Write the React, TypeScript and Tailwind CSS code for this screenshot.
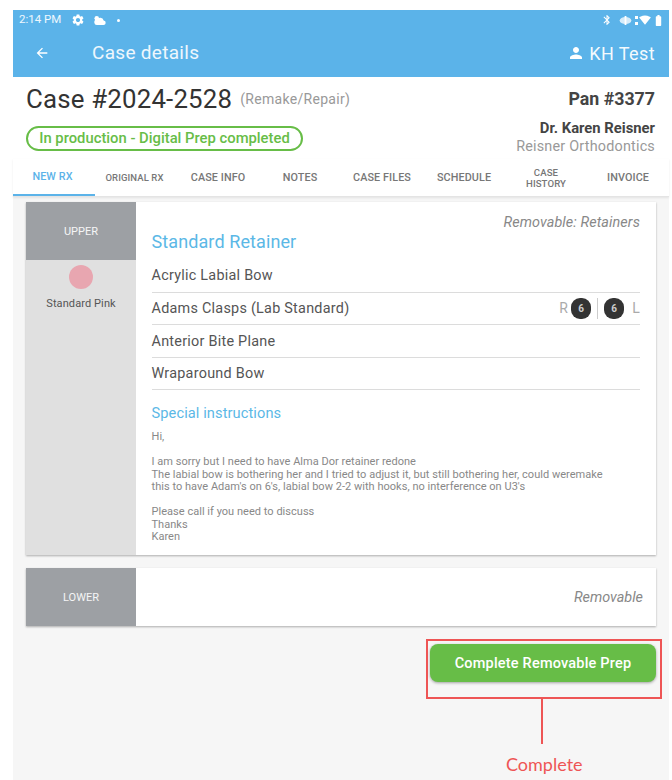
import { MdArrowBack, MdBatteryFull, MdBluetooth, MdPerson, MdSettings, MdSignalWifi4Bar } from 'react-icons/md';

const tabs = ['CASE INFO', 'NOTES', 'CASE FILES', 'SCHEDULE'];

function Option({ label, children }: { label: string; children?: React.ReactNode }) {
  return (
    <div className="flex h-[32.6px] items-center justify-between border-b border-[#dcdcdc] pt-px text-[14.4px] tracking-[0.25px] text-[#555]">
      <span>{label}</span>
      {children}
    </div>
  );
}

function ToothBadge() {
  return (
    <span className="flex h-[21px] w-5 items-center justify-center rounded-[9px] bg-[#333] text-[10px] font-bold text-[#ccc]">
      6
    </span>
  );
}

export default function App() {
  return (
    <div className="h-[780px] w-[672px] overflow-hidden bg-white pt-[10px] pr-[3px] pl-[13px] font-['Roboto',sans-serif]">
      <div className="relative flex h-[770px] flex-col bg-[#f6f6f6]">
        {/* Status bar + app bar */}
        <header className="h-[67px] shrink-0 bg-[#5bb3e9] text-white">
          <div className="flex h-[19px] items-center justify-between pt-px pr-[4px] pl-[6px]">
            <div className="flex items-center">
              <span className="text-[11.5px] leading-none text-white/90">2:14 PM</span>
              <MdSettings className="ml-[10px] size-[14px]" />
              <svg viewBox="0 0 14 12" className="ml-[8px] h-[11px] w-[13px]" fill="white">
                <circle cx="4" cy="3.5" r="2.5" />
                <path d="M4.5 11a3 3 0 0 1-.4-6 4 4 0 0 1 7.4 1A2.5 2.5 0 0 1 11 11z" />
              </svg>
              <span className="ml-[11px] size-[3px] rounded-full bg-white" />
            </div>
            <div className="flex items-center">
              <MdBluetooth className="size-[12px]" />
              <svg viewBox="0 0 14 10" className="ml-[6px] h-[9px] w-[13px]" fill="white">
                <ellipse cx="7" cy="5" rx="6.5" ry="4" opacity="0.75" />
                <rect x="6" y="0" width="2" height="10" />
              </svg>
              <span className="ml-[3px] flex h-[9px] w-[3px] flex-col justify-between">
                <span className="h-[3px] bg-white" />
                <span className="h-[3px] bg-white" />
              </span>
              <MdSignalWifi4Bar className="ml-px size-[12px]" />
              <MdBatteryFull className="ml-px size-[13px]" />
            </div>
          </div>
          <div className="flex h-[48px] items-center pr-[14px] pl-[21px]">
            <MdArrowBack className="size-[16px]" />
            <span className="ml-[42px] text-[19px] tracking-[0.3px] text-white/90">Case details</span>
            <div className="ml-auto flex items-center gap-[4px]">
              <MdPerson className="size-[18px]" />
              <span className="text-[18px] tracking-[0.4px] text-white/95">KH Test</span>
            </div>
          </div>
        </header>

        {/* Case summary */}
        <section className="flex h-[82px] shrink-0 justify-between bg-white pr-[14px] pl-[13px]">
          <div>
            <div className="flex items-center pt-[6px]">
              <span className="text-[25.8px] leading-[32px] tracking-[0.2px] text-[#333]">Case #2024-2528</span>
              <span className="ml-2 text-[14px] tracking-[0.3px] text-[#999]">(Remake/Repair)</span>
            </div>
            <div className="mt-[11px] flex h-[25px] w-[277px] items-center justify-center rounded-full border-2 border-[#67bd47] text-[14.8px] font-medium text-[#67bd47]">
              In production - Digital Prep completed
            </div>
          </div>
          <div className="flex flex-col items-end pt-[11px]">
            <span className="text-[17.8px] leading-[22px] font-bold text-[#444]">Pan #3377</span>
            <span className="mt-[9px] text-[14.8px] leading-[18px] font-bold text-[#444]">Dr. Karen Reisner</span>
            <span className="text-[14.4px] leading-[19px] tracking-[0.2px] text-[#999]">Reisner Orthodontics</span>
          </div>
        </section>

        {/* Tabs */}
        <nav className="flex h-[38px] shrink-0 items-center border-b border-[#e4e4e4] bg-white pt-px text-[10.8px] font-medium tracking-[0.1px] text-[#777] shadow-[0_1px_2px_rgba(0,0,0,0.08)]">
          <div className="flex h-full w-[82px] items-center justify-center border-b-2 border-[#5bb3e9] pr-[3px] text-[#5bb3e9]">NEW RX</div>
          <div className="flex h-full w-[82px] items-center justify-center pr-[3px] text-[9.5px]">ORIGINAL RX</div>
          {tabs.map((tab) => (
            <div key={tab} className="flex h-full w-[82px] items-center justify-center">{tab}</div>
          ))}
          <div className="flex h-full w-[82px] items-center justify-center text-center text-[9.6px] leading-[11px]">CASE<br />HISTORY</div>
          <div className="flex h-full w-[82px] items-center justify-center">INVOICE</div>
        </nav>

        <main className="flex flex-col px-[13px] pt-[5px]">
          {/* Upper */}
          <div className="flex h-[353px] bg-white shadow-[0_1px_2px_rgba(0,0,0,0.3)]">
            <div className="w-[110px] shrink-0 bg-[#e0e0e0]">
              <div className="flex h-[58px] items-center justify-center bg-[#9da0a4] pt-[2px] text-[11px] text-white/90">UPPER</div>
              <div className="mx-auto mt-[5px] size-6 rounded-full bg-[#e8a6b0]" />
              <div className="mt-[7px] text-center text-[11px] tracking-[0.1px] text-[#555]">Standard Pink</div>
            </div>
            <div className="flex-1 pr-4 pl-[15.5px]">
              <div className="pt-[13px] text-right text-[14.4px] leading-[16px] tracking-[0.1px] text-[#888] italic">Removable: Retainers</div>
              <div className="-mt-px text-[18px] leading-[24px] tracking-[0.1px] text-[#5bb8e6]">Standard Retainer</div>
              <div className="mt-[6px]">
                <Option label="Acrylic Labial Bow" />
                <Option label="Adams Clasps (Lab Standard)">
                  <div className="flex items-center text-[14px] text-[#aaa]">
                    <span className="mr-[3px]">R</span>
                    <ToothBadge />
                    <span className="mx-[6px] h-[21px] w-px bg-[#ccc]" />
                    <ToothBadge />
                    <span className="ml-[8px]">L</span>
                  </div>
                </Option>
                <Option label="Anterior Bite Plane" />
                <Option label="Wraparound Bow" />
              </div>
              <div className="mt-[13px] text-[14.6px] leading-[20px] tracking-[0.1px] text-[#5bb8e6]">Special instructions</div>
              <p className="mt-[8px] text-[11px] leading-[12.5px] tracking-[0.03px] whitespace-pre-line text-[#888]">
                {"Hi,\n\nI am sorry but I need to have Alma Dor retainer redone\nThe labial bow is bothering her and I tried to adjust it, but still bothering her, could weremake\nthis to have Adam's on 6's, labial bow 2-2 with hooks, no interference on U3's\n\nPlease call if you need to discuss\nThanks\nKaren"}
              </p>
            </div>
          </div>

          {/* Lower */}
          <div className="mt-[13px] flex h-[58px] bg-white shadow-[0_1px_2px_rgba(0,0,0,0.3)]">
            <div className="flex w-[110px] shrink-0 items-center justify-center bg-[#9da0a4] pt-[2px] text-[11px] text-white/90">LOWER</div>
            <div className="flex-1 pt-[22px] pr-[13px] text-right text-[14.4px] leading-[16px] text-[#888] italic">Removable</div>
          </div>

          <div className="mt-[18px] flex justify-end">
            <button className="h-[38px] w-[226px] rounded-[8px] bg-[#67bd47] pt-px text-[14.5px] font-medium tracking-[0.2px] text-white shadow-[0_1px_3px_rgba(0,0,0,0.35)]">
              Complete Removable Prep
            </button>
          </div>
        </main>

        {/* Red annotation over the button */}
        <div className="absolute top-[629px] left-[413px] h-[60px] w-[236px] border-2 border-[#ee5555]" />
        <div className="absolute top-[689px] left-[528px] h-[45px] w-[2px] bg-[#ee5555]" />
        <div className="absolute top-[743px] left-[493px] font-['Lato',sans-serif] text-[18px] leading-[22px] text-[#ee5555]">Complete</div>
      </div>
    </div>
  );
}
